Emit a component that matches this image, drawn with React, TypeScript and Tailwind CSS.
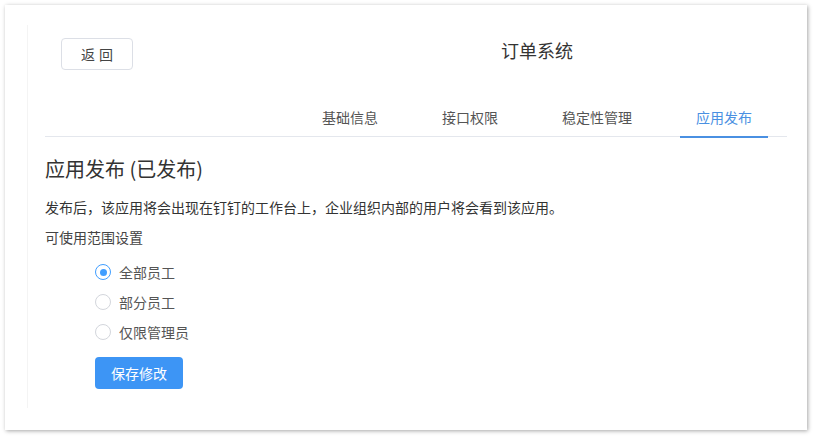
import React, { useState } from 'react';

const tabs = ['基础信息', '接口权限', '稳定性管理', '应用发布'];
const options = ['全部员工', '部分员工', '仅限管理员'];

export default function App() {
  const [active, setActive] = useState(3);
  const [scope, setScope] = useState(0);

  return (
    <div
      className="min-h-screen bg-white p-[5px] text-[#333]"
      style={{ fontFamily: '"Noto Sans CJK SC", "Noto Sans", sans-serif' }}
    >
      <div className="w-[802px] h-[425px] bg-white shadow-[1px_1px_4px_rgba(0,0,0,0.35)] pl-[22px] pt-[20px]">
        <div className="w-[760px] h-[383px] border-l border-[#f4f4f4]">
          {/* 顶部 */}
          <div className="flex items-start h-[72px]">
            <button className="ml-[33px] mt-[13px] w-[72px] h-[32px] border border-[#dcdfe6] rounded-[4px] text-[14px] text-[#444] bg-white tracking-[4px] pl-[4px]">
              返回
            </button>
            <div className="ml-[368px] mt-[12px] text-[18px] leading-[26px] text-[#333]">订单系统</div>
          </div>

          {/* 标签 */}
          <div className="ml-[17px] w-[742px] h-[40px] border-b border-[#e4e7ed] flex justify-end pr-[3px]">
            {tabs.map((t, i) => (
              <div
                key={t}
                onClick={() => setActive(i)}
                className={`relative px-[32px] h-[40px] flex items-center text-[14px] cursor-pointer ${
                  i === active ? 'text-[#4a90e2]' : 'text-[#555]'
                }`}
              >
                {t}
                {i === active && <div className="absolute left-[16px] right-[16px] bottom-[-1px] h-[2px] bg-[#4a90e2]" />}
              </div>
            ))}
          </div>

          {/* 内容 */}
          <div className="pl-[17px]">
            <div className="mt-[19px] text-[20px] leading-[26px] text-[#333]">应用发布 (已发布)</div>
            <div className="mt-[15px] text-[14px] leading-[20px] text-[#333]">
              发布后，该应用将会出现在钉钉的工作台上，企业组织内部的用户将会看到该应用。
            </div>
            <div className="mt-[10px] text-[14px] leading-[20px] text-[#444]">可使用范围设置</div>

            <div className="mt-[10px] pl-[50px]">
              {options.map((o, i) => (
                <div key={o} onClick={() => setScope(i)} className="flex items-center gap-[8px] h-[30px] cursor-pointer">
                  <span
                    className={`w-[16px] h-[16px] rounded-full border flex items-center justify-center ${
                      i === scope ? 'border-[#409eff]' : 'border-[#d3d6dc]'
                    }`}
                  >
                    {i === scope && <span className="w-[7px] h-[7px] rounded-full bg-[#409eff]" />}
                  </span>
                  <span className="text-[14px] text-[#555]">{o}</span>
                </div>
              ))}
            </div>

            <button className="mt-[10px] ml-[50px] w-[88px] h-[32px] rounded-[4px] bg-[#3d95f5] text-white text-[14px]">
              保存修改
            </button>
          </div>
        </div>
      </div>
    </div>
  );
}
